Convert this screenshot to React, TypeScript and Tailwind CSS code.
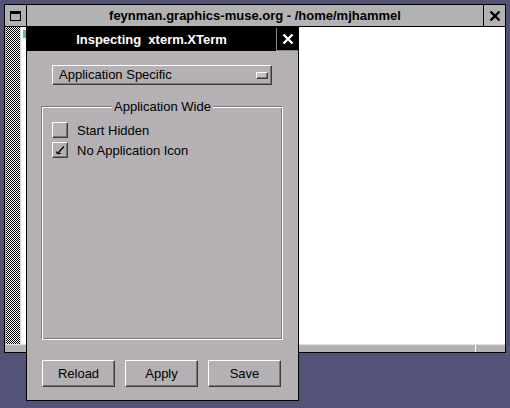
import { useState } from "react";

const font = { fontFamily: '"Liberation Sans", Arial, sans-serif' };

const raised =
  "border border-t-white border-l-white border-b-[#3c3a3c] border-r-[#3c3a3c] shadow-[inset_-1px_-1px_0_#7a767a]";

const CheckBox = ({ checked, onClick }: { checked: boolean; onClick: () => void }) => (
  <button onClick={onClick} className={`w-[16px] h-[16px] bg-[#b4b0b4] ${raised} flex items-center justify-center`}>
    {checked && (
      <svg width="10" height="10" viewBox="0 0 10 10">
        <path d="M1 6.5 L2.5 8.5 L9 1.5 M2.5 8.5 L6 8.5" stroke="#000" strokeWidth="1.2" fill="none" />
      </svg>
    )}
  </button>
);

const Button = ({ label }: { label: string }) => (
  <button className={`w-[73px] h-[27px] bg-[#b4b0b4] ${raised} text-[13px] text-black`}>{label}</button>
);

export default function App() {
  const [hidden, setHidden] = useState(false);
  const [noIcon, setNoIcon] = useState(true);

  return (
    <div className="relative w-[510px] h-[408px] bg-[#535379] overflow-hidden" style={font}>
      {/* xterm window behind */}
      <div className="absolute left-[4px] top-[4px] w-[502px] h-[349px] border border-black bg-[#b2b2b2] flex flex-col">
        <div className="h-[22px] flex border-b border-black">
          <div className="w-[22px] border-r border-black flex items-center justify-center">
            <div className="w-[11px] h-[10px] border border-black border-t-[3px]" />
          </div>
          <div className="flex-1 flex items-center justify-center font-bold text-[13px] text-black">
            feynman.graphics-muse.org - /home/mjhammel
          </div>
          <div className="w-[22px] border-l border-black flex items-center justify-center">
            <svg width="12" height="12" viewBox="0 0 12 12">
              <path d="M1.5 1.5 L10.5 10.5 M10.5 1.5 L1.5 10.5" stroke="#000" strokeWidth="2.4" />
            </svg>
          </div>
        </div>
        <div className="flex-1 flex">
          <div className="w-[14px] ml-[1px] bg-[repeating-conic-gradient(#000_0_25%,#fff_0_50%)] bg-[length:2px_2px]" />
          <div className="w-[1px] bg-[#d8d8d8]" />
          <div className="flex-1 bg-white pl-[2px] pt-[3px]">
            <div className="w-[4px] h-[8px] bg-[#10a0a0]/70" />
          </div>
        </div>
        <div className="h-[8px] border-t border-[#e0e0e0] bg-[#b2b2b2] flex justify-end">
          <div className="w-[1px] bg-white mr-[29px]" />
        </div>
      </div>

      {/* inspector dialog */}
      <div className="absolute left-[26px] top-[27px] w-[273px] h-[374px] border border-black bg-[#b4b0b4] flex flex-col">
        <div className="h-[23px] bg-black flex">
          <div className="flex-1 flex items-center justify-center text-white font-bold text-[13px] whitespace-pre">
            {"Inspecting  xterm.XTerm"}
          </div>
          <div className="w-[22px] border border-[#8a868a] border-t-0 border-r-0 flex items-center justify-center">
            <svg width="12" height="12" viewBox="0 0 12 12">
              <path d="M1.5 1.5 L10.5 10.5 M10.5 1.5 L1.5 10.5" stroke="#fff" strokeWidth="2.4" />
            </svg>
          </div>
        </div>

        <div className="flex-1 flex flex-col px-[15px] pt-[14px]">
          <div className={`ml-[10px] w-[220px] h-[20px] ${raised} flex items-center justify-between pl-[6px] pr-[3px]`}>
            <span className="text-[13px] text-black">Application Specific</span>
            <div className={`w-[12px] h-[7px] ${raised} bg-[#c4c0c4]`} />
          </div>

          <div className="relative mt-[22px] h-[233px] border border-white shadow-[-1px_-1px_0_#7e7a7e,inset_-1px_-1px_0_#7e7a7e]">
            <div className="absolute left-0 right-0 -top-[9px] flex justify-center">
              <span className="bg-[#b4b0b4] px-[2px] text-[13px] leading-[16px] text-black">Application Wide</span>
            </div>
            <div className="flex flex-col gap-[4px] pl-[9px] pt-[14px]">
              <div className="flex items-center gap-[9px] h-[16px]">
                <CheckBox checked={hidden} onClick={() => setHidden(!hidden)} />
                <span className="text-[13px] leading-none text-black">Start Hidden</span>
              </div>
              <div className="flex items-center gap-[9px] h-[16px]">
                <CheckBox checked={noIcon} onClick={() => setNoIcon(!noIcon)} />
                <span className="text-[13px] leading-none text-black">No Application Icon</span>
              </div>
            </div>
          </div>

          <div className="mt-[20px] flex gap-[10px]">
            <Button label="Reload" />
            <Button label="Apply" />
            <Button label="Save" />
          </div>
        </div>
      </div>
    </div>
  );
}
